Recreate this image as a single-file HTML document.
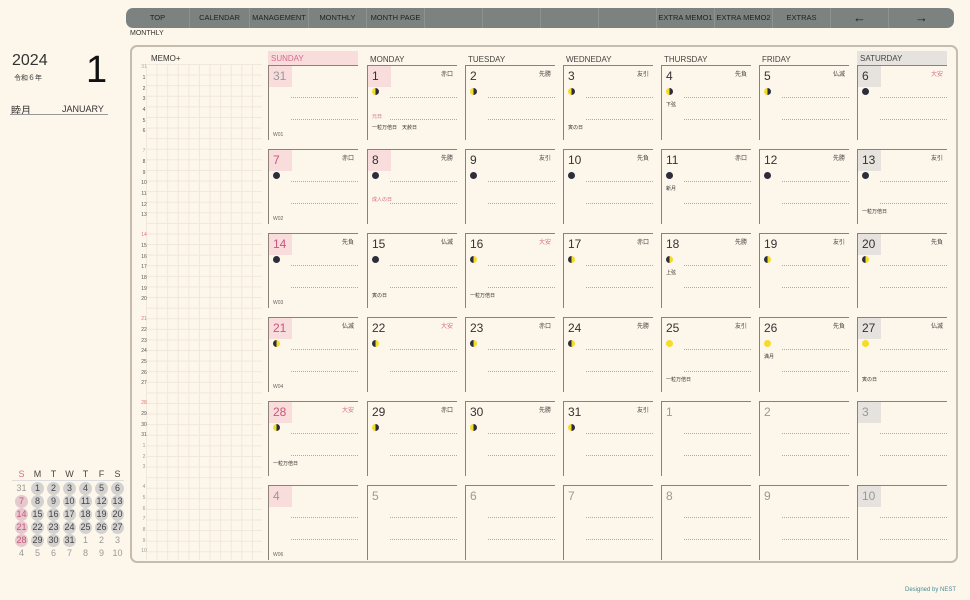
<!DOCTYPE html>
<html><head><meta charset="utf-8"><style>
*{margin:0;padding:0;box-sizing:border-box}
body{width:970px;height:600px;background:#fdf6ea;font-family:"Liberation Sans","Noto Sans CJK JP",sans-serif;color:#333;position:relative;overflow:hidden}
.a{position:absolute}
.nav{left:126px;top:8px;width:828px;height:20px;background:#7c8280;border-radius:7px;overflow:hidden}
.nav div{position:absolute;top:0;height:20px;border-right:1px solid #8d9290;font-size:7.5px;color:#1e2120;text-align:center;line-height:20px}
.frame{left:130px;top:45px;width:828px;height:518px;border:2px solid #c6bcad;border-radius:7px}
.grid{left:146px;top:64px;width:116px;height:496px;background-image:linear-gradient(#f1e7d9 1px,transparent 1px),linear-gradient(90deg,#f1e7d9 1px,transparent 1px);background-size:10.6px 10.6px}
.hr{font-size:5px;color:#555;left:139px;width:10px;text-align:center}
.dh{font-size:8px;color:#444;top:54px;height:12px;width:90px;padding-left:3px;line-height:12px}
.c{position:absolute;width:90px;height:75px;border-top:1px solid #8a8278;border-left:1.5px solid #8a8278}
.c .n{position:absolute;left:0;top:0;width:23px;height:21px;font-size:12px;padding:3px 0 0 4px;color:#333}
.c .r{position:absolute;right:4px;top:3px;font-size:6px;color:#444}
.c .m{position:absolute;left:4px;top:22px;width:7px;height:7px;border-radius:50%}
.c .d1,.c .d2{position:absolute;left:22px;right:0;border-top:1px dotted #aaa}
.c .d1{top:31px}.c .d2{top:53px}
.c .t{position:absolute;left:4px;font-size:5px;color:#333}
.c .w{position:absolute;left:4px;top:66px;font-size:5px;color:#666}
.pk{background:#f9dcdc}.gy{background:#e6e2de}
.g .n{color:#999}
.half{background:linear-gradient(90deg,#f3dc2a 50%,#2d2d3c 50%)}
.halfr{background:linear-gradient(90deg,#2d2d3c 50%,#f3dc2a 50%)}
.dk{background:#2d2d3c}.yl{background:#f3dc2a}
.mc div{position:absolute;width:13px;height:13px;border-radius:50%;font-size:9px;text-align:center;line-height:13px;color:#444}
.ci{background:#d4d2d0}.cp{background:#e6c8cf;color:#c9567a!important}.lt{color:#999!important}
</style></head><body>
<div class="a nav">
<div style="left:0;width:64px">TOP</div><div style="left:64px;width:60px">CALENDAR</div><div style="left:124px;width:59px">MANAGEMENT</div><div style="left:183px;width:58px">MONTHLY</div><div style="left:241px;width:58px">MONTH PAGE</div><div style="left:299px;width:58px"></div><div style="left:357px;width:58px"></div><div style="left:415px;width:58px"></div><div style="left:473px;width:58px"></div><div style="left:531px;width:58px">EXTRA MEMO1</div><div style="left:589px;width:58px">EXTRA MEMO2</div><div style="left:647px;width:58px">EXTRAS</div><div style="left:705px;width:58px;font-size:13px">←</div><div style="left:763px;width:65px;font-size:13px;border:none">→</div>
</div>
<div class="a" style="left:130px;top:30px;font-size:7px;color:#333">MONTHLY</div>
<div class="a" style="left:12px;top:52px;font-size:16px;color:#333">2024</div>
<div class="a" style="left:14px;top:73px;font-size:7px">令和６年</div>
<div class="a" style="left:86px;top:50px;font-size:38px;color:#111;line-height:40px">1</div>
<div class="a" style="left:11px;top:102px;font-size:10px;color:#333">睦月</div>
<div class="a" style="left:62px;top:104px;font-size:9px;color:#333">JANUARY</div>
<div class="a" style="left:10px;top:114px;width:98px;border-top:1px solid #999"></div>
<div class="a frame"></div>
<div class="a" style="left:151px;top:54px;font-size:8px;color:#333">MEMO+</div>
<div class="a grid"></div>
<div class="a dh pk" style="left:268px;top:51px;height:15px;padding-top:2px;color:#d76b8a">SUNDAY</div>
<div class="a dh" style="left:367px">MONDAY</div>
<div class="a dh" style="left:465px">TUESDAY</div>
<div class="a dh" style="left:563px">WEDNEDAY</div>
<div class="a dh" style="left:661px">THURSDAY</div>
<div class="a dh" style="left:759px">FRIDAY</div>
<div class="a dh gy" style="left:857px;top:51px;height:15px;padding-top:2px">SATURDAY</div>

<div class="a hr" style="top:64px;color:#aaa">31</div><div class="a hr" style="top:75px">1</div><div class="a hr" style="top:86px">2</div><div class="a hr" style="top:96px">3</div><div class="a hr" style="top:107px">4</div><div class="a hr" style="top:118px">5</div><div class="a hr" style="top:128px">6</div>
<div class="a hr" style="top:148px;color:#aaa">7</div><div class="a hr" style="top:159px">8</div><div class="a hr" style="top:170px">9</div><div class="a hr" style="top:180px">10</div><div class="a hr" style="top:191px">11</div><div class="a hr" style="top:202px">12</div><div class="a hr" style="top:212px">13</div>
<div class="a hr" style="top:232px;color:#d77">14</div><div class="a hr" style="top:243px">15</div><div class="a hr" style="top:254px">16</div><div class="a hr" style="top:264px">17</div><div class="a hr" style="top:275px">18</div><div class="a hr" style="top:286px">19</div><div class="a hr" style="top:296px">20</div>
<div class="a hr" style="top:316px;color:#d77">21</div><div class="a hr" style="top:327px">22</div><div class="a hr" style="top:338px">23</div><div class="a hr" style="top:348px">24</div><div class="a hr" style="top:359px">25</div><div class="a hr" style="top:370px">26</div><div class="a hr" style="top:380px">27</div>
<div class="a hr" style="top:400px;color:#d77">28</div><div class="a hr" style="top:411px">29</div><div class="a hr" style="top:422px">30</div><div class="a hr" style="top:432px">31</div><div class="a hr" style="top:443px;color:#999">1</div><div class="a hr" style="top:454px;color:#999">2</div><div class="a hr" style="top:464px;color:#999">3</div>
<div class="a hr" style="top:484px;color:#999">4</div><div class="a hr" style="top:495px;color:#999">5</div><div class="a hr" style="top:506px;color:#999">6</div><div class="a hr" style="top:516px;color:#999">7</div><div class="a hr" style="top:527px;color:#999">8</div><div class="a hr" style="top:538px;color:#999">9</div><div class="a hr" style="top:548px;color:#999">10</div>

<div class="c" style="left:268px;top:65px"><div class="n pk" style="color:#999">31</div><div class="d1"></div><div class="d2"></div><div class="w">W01</div></div>
<div class="c" style="left:367px;top:65px"><div class="n pk">1</div><div class="r">赤口</div><div class="m half"></div><div class="d1"></div><div class="d2"></div><div class="t" style="top:47px;color:#d76b8a">元日</div><div class="t" style="top:58px">一粒万倍日　天赦日</div></div>
<div class="c" style="left:465px;top:65px"><div class="n">2</div><div class="r">先勝</div><div class="m half"></div><div class="d1"></div><div class="d2"></div></div>
<div class="c" style="left:563px;top:65px"><div class="n">3</div><div class="r">友引</div><div class="m half"></div><div class="d1"></div><div class="d2"></div><div class="t" style="top:58px">寅の日</div></div>
<div class="c" style="left:661px;top:65px"><div class="n">4</div><div class="r">先負</div><div class="m half"></div><div class="d1"></div><div class="d2"></div><div class="t" style="top:35px">下弦</div></div>
<div class="c" style="left:759px;top:65px"><div class="n">5</div><div class="r">仏滅</div><div class="m half"></div><div class="d1"></div><div class="d2"></div></div>
<div class="c" style="left:857px;top:65px"><div class="n gy">6</div><div class="r" style="color:#d76b8a">大安</div><div class="m dk"></div><div class="d1"></div><div class="d2"></div></div>

<div class="c" style="left:268px;top:149px"><div class="n pk" style="color:#c9567a">7</div><div class="r">赤口</div><div class="m dk"></div><div class="d1"></div><div class="d2"></div><div class="w">W02</div></div>
<div class="c" style="left:367px;top:149px"><div class="n pk">8</div><div class="r">先勝</div><div class="m dk"></div><div class="d1"></div><div class="d2"></div><div class="t" style="top:46px;color:#d76b8a">成人の日</div></div>
<div class="c" style="left:465px;top:149px"><div class="n">9</div><div class="r">友引</div><div class="m dk"></div><div class="d1"></div><div class="d2"></div></div>
<div class="c" style="left:563px;top:149px"><div class="n">10</div><div class="r">先負</div><div class="m dk"></div><div class="d1"></div><div class="d2"></div></div>
<div class="c" style="left:661px;top:149px"><div class="n">11</div><div class="r">赤口</div><div class="m dk"></div><div class="d1"></div><div class="d2"></div><div class="t" style="top:35px">新月</div></div>
<div class="c" style="left:759px;top:149px"><div class="n">12</div><div class="r">先勝</div><div class="m dk"></div><div class="d1"></div><div class="d2"></div></div>
<div class="c" style="left:857px;top:149px"><div class="n gy">13</div><div class="r">友引</div><div class="m dk"></div><div class="d1"></div><div class="d2"></div><div class="t" style="top:58px">一粒万倍日</div></div>

<div class="c" style="left:268px;top:233px"><div class="n pk" style="color:#c9567a">14</div><div class="r">先負</div><div class="m dk"></div><div class="d1"></div><div class="d2"></div><div class="w">W03</div></div>
<div class="c" style="left:367px;top:233px"><div class="n">15</div><div class="r">仏滅</div><div class="m dk"></div><div class="d1"></div><div class="d2"></div><div class="t" style="top:58px">寅の日</div></div>
<div class="c" style="left:465px;top:233px"><div class="n">16</div><div class="r" style="color:#d76b8a">大安</div><div class="m halfr"></div><div class="d1"></div><div class="d2"></div><div class="t" style="top:58px">一粒万倍日</div></div>
<div class="c" style="left:563px;top:233px"><div class="n">17</div><div class="r">赤口</div><div class="m halfr"></div><div class="d1"></div><div class="d2"></div></div>
<div class="c" style="left:661px;top:233px"><div class="n">18</div><div class="r">先勝</div><div class="m halfr"></div><div class="d1"></div><div class="d2"></div><div class="t" style="top:35px">上弦</div></div>
<div class="c" style="left:759px;top:233px"><div class="n">19</div><div class="r">友引</div><div class="m halfr"></div><div class="d1"></div><div class="d2"></div></div>
<div class="c" style="left:857px;top:233px"><div class="n gy">20</div><div class="r">先負</div><div class="m halfr"></div><div class="d1"></div><div class="d2"></div></div>

<div class="c" style="left:268px;top:317px"><div class="n pk" style="color:#c9567a">21</div><div class="r">仏滅</div><div class="m halfr"></div><div class="d1"></div><div class="d2"></div><div class="w">W04</div></div>
<div class="c" style="left:367px;top:317px"><div class="n">22</div><div class="r" style="color:#d76b8a">大安</div><div class="m halfr"></div><div class="d1"></div><div class="d2"></div></div>
<div class="c" style="left:465px;top:317px"><div class="n">23</div><div class="r">赤口</div><div class="m halfr"></div><div class="d1"></div><div class="d2"></div></div>
<div class="c" style="left:563px;top:317px"><div class="n">24</div><div class="r">先勝</div><div class="m halfr"></div><div class="d1"></div><div class="d2"></div></div>
<div class="c" style="left:661px;top:317px"><div class="n">25</div><div class="r">友引</div><div class="m yl"></div><div class="d1"></div><div class="d2"></div><div class="t" style="top:58px">一粒万倍日</div></div>
<div class="c" style="left:759px;top:317px"><div class="n">26</div><div class="r">先負</div><div class="m yl"></div><div class="d1"></div><div class="d2"></div><div class="t" style="top:35px">満月</div></div>
<div class="c" style="left:857px;top:317px"><div class="n gy">27</div><div class="r">仏滅</div><div class="m yl"></div><div class="d1"></div><div class="d2"></div><div class="t" style="top:58px">寅の日</div></div>

<div class="c" style="left:268px;top:401px"><div class="n pk" style="color:#c9567a">28</div><div class="r" style="color:#d76b8a">大安</div><div class="m half"></div><div class="d1"></div><div class="d2"></div><div class="t" style="top:58px">一粒万倍日</div></div>
<div class="c" style="left:367px;top:401px"><div class="n">29</div><div class="r">赤口</div><div class="m half"></div><div class="d1"></div><div class="d2"></div></div>
<div class="c" style="left:465px;top:401px"><div class="n">30</div><div class="r">先勝</div><div class="m half"></div><div class="d1"></div><div class="d2"></div></div>
<div class="c" style="left:563px;top:401px"><div class="n">31</div><div class="r">友引</div><div class="m half"></div><div class="d1"></div><div class="d2"></div></div>
<div class="c g" style="left:661px;top:401px"><div class="n">1</div><div class="d1"></div><div class="d2"></div></div>
<div class="c g" style="left:759px;top:401px"><div class="n">2</div><div class="d1"></div><div class="d2"></div></div>
<div class="c g" style="left:857px;top:401px"><div class="n gy">3</div><div class="d1"></div><div class="d2"></div></div>

<div class="c g" style="left:268px;top:485px"><div class="n pk">4</div><div class="d1"></div><div class="d2"></div><div class="w">W06</div></div>
<div class="c g" style="left:367px;top:485px"><div class="n">5</div><div class="d1"></div><div class="d2"></div></div>
<div class="c g" style="left:465px;top:485px"><div class="n">6</div><div class="d1"></div><div class="d2"></div></div>
<div class="c g" style="left:563px;top:485px"><div class="n">7</div><div class="d1"></div><div class="d2"></div></div>
<div class="c g" style="left:661px;top:485px"><div class="n">8</div><div class="d1"></div><div class="d2"></div></div>
<div class="c g" style="left:759px;top:485px"><div class="n">9</div><div class="d1"></div><div class="d2"></div></div>
<div class="c g" style="left:857px;top:485px"><div class="n gy">10</div><div class="d1"></div><div class="d2"></div></div>

<div class="a mc" style="left:0;top:0">
<div style="left:15px;top:468px;color:#d76b8a">S</div><div style="left:31px;top:468px">M</div><div style="left:47px;top:468px">T</div><div style="left:63px;top:468px">W</div><div style="left:79px;top:468px">T</div><div style="left:95px;top:468px">F</div><div style="left:111px;top:468px">S</div>
<div class="lt" style="left:15px;top:482px">31</div><div class="ci" style="left:31px;top:482px">1</div><div class="ci" style="left:47px;top:482px">2</div><div class="ci" style="left:63px;top:482px">3</div><div class="ci" style="left:79px;top:482px">4</div><div class="ci" style="left:95px;top:482px">5</div><div class="ci" style="left:111px;top:482px">6</div>
<div class="ci cp" style="left:15px;top:495px">7</div><div class="ci" style="left:31px;top:495px">8</div><div class="ci" style="left:47px;top:495px">9</div><div class="ci" style="left:63px;top:495px">10</div><div class="ci" style="left:79px;top:495px">11</div><div class="ci" style="left:95px;top:495px">12</div><div class="ci" style="left:111px;top:495px">13</div>
<div class="ci cp" style="left:15px;top:508px">14</div><div class="ci" style="left:31px;top:508px">15</div><div class="ci" style="left:47px;top:508px">16</div><div class="ci" style="left:63px;top:508px">17</div><div class="ci" style="left:79px;top:508px">18</div><div class="ci" style="left:95px;top:508px">19</div><div class="ci" style="left:111px;top:508px">20</div>
<div class="ci cp" style="left:15px;top:521px">21</div><div class="ci" style="left:31px;top:521px">22</div><div class="ci" style="left:47px;top:521px">23</div><div class="ci" style="left:63px;top:521px">24</div><div class="ci" style="left:79px;top:521px">25</div><div class="ci" style="left:95px;top:521px">26</div><div class="ci" style="left:111px;top:521px">27</div>
<div class="ci cp" style="left:15px;top:534px">28</div><div class="ci" style="left:31px;top:534px">29</div><div class="ci" style="left:47px;top:534px">30</div><div class="ci" style="left:63px;top:534px">31</div><div class="lt" style="left:79px;top:534px">1</div><div class="lt" style="left:95px;top:534px">2</div><div class="lt" style="left:111px;top:534px">3</div>
<div class="lt" style="left:15px;top:547px">4</div><div class="lt" style="left:31px;top:547px">5</div><div class="lt" style="left:47px;top:547px">6</div><div class="lt" style="left:63px;top:547px">7</div><div class="lt" style="left:79px;top:547px">8</div><div class="lt" style="left:95px;top:547px">9</div><div class="lt" style="left:111px;top:547px">10</div>
</div>
<div class="a" style="left:12px;top:480px;width:112px;border-top:1px solid #ddd"></div>
<div class="a" style="left:905px;top:587px;font-size:6px;color:#4a8d94">Designed by NEST</div>
</body></html>
